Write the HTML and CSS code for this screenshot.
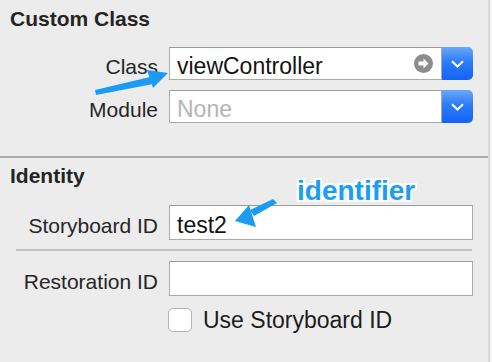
FILE: index.html
```html
<!DOCTYPE html>
<html lang="en">
<head>
    <meta charset="UTF-8" />
    <title>Identity Inspector</title>
    <link rel="stylesheet" href="styles.css">
</head>
<body>
    <div class="panel">
        <div class="section custom-class">
            <h2 class="title">Custom Class</h2>
            <div class="row">
                <label class="label">Class</label>
                <div class="field">
                    <div class="field-box">
                        <span class="value">viewController</span>
                        <svg class="goto" width="19" height="19" viewBox="0 0 19 19">
                            <circle cx="9.5" cy="9.5" r="9.5" fill="#8c8c8c"/>
                            <path d="M4.5 7.6h5V4.6l5 4.9-5 4.9v-3h-5z" fill="#fff"/>
                        </svg>
                    </div>
                    <div class="combo-btn">
                        <svg width="13" height="8" viewBox="0 0 13 8"><path d="M1 1.2l5.5 5.3 5.5-5.3" fill="none" stroke="#fff" stroke-width="2"/></svg>
                    </div>
                </div>
            </div>
            <div class="row">
                <label class="label">Module</label>
                <div class="field">
                    <div class="field-box">
                        <span class="value placeholder">None</span>
                    </div>
                    <div class="combo-btn">
                        <svg width="13" height="8" viewBox="0 0 13 8"><path d="M1 1.2l5.5 5.3 5.5-5.3" fill="none" stroke="#fff" stroke-width="2"/></svg>
                    </div>
                </div>
            </div>
        </div>
        <div class="divider"></div>
        <div class="section identity">
            <h2 class="title">Identity</h2>
            <div class="row">
                <label class="label">Storyboard ID</label>
                <div class="field text-field">
                    <div class="field-box"><span class="value">test2</span></div>
                </div>
            </div>
            <div class="inner-divider"></div>
            <div class="row">
                <label class="label">Restoration ID</label>
                <div class="field text-field">
                    <div class="field-box"><span class="value">&nbsp;</span></div>
                </div>
            </div>
            <div class="check-row">
                <span class="checkbox"></span>
                <span class="check-label">Use Storyboard ID</span>
            </div>
        </div>
    </div>

    <!-- annotations drawn over the screenshot -->
    <svg class="annotations" width="492" height="362" viewBox="0 0 492 362">
        <g fill="#1b9bf4">
            <polygon points="95,90 150,77 153,84 96,95"/>
            <polygon points="147,70 168,73 153,88"/>
            <polygon points="250,210 273,199 277,203 254,216"/>
            <polygon points="235,221 249,205 256,227"/>
        </g>
    </svg>
    <div class="note">identifier</div>
</body>
</html>
```

FILE: styles.css
```css
body {
    margin: 0;
    width: 492px;
    height: 362px;
    overflow: hidden;
    position: relative;
    background-color: #f4f4f4;
    font-family: "Liberation Sans", Arial, sans-serif;
    color: #262626;
}

.panel {
    width: 488px;
    height: 362px;
    background-color: #ececec;
    border-right: 2px solid #d8d8d8;
}

.section {
    padding-top: 7px;
}

.custom-class {
    padding-bottom: 33px;
}

.identity {
    padding-top: 6px;
}

.title {
    margin: 0 0 16px 10px;
    font-size: 21px;
    line-height: 24px;
    font-weight: bold;
    color: #242424;
}

.identity .title {
    margin-bottom: 17px;
}

.row {
    display: flex;
    align-items: baseline;
    gap: 11px;
}

.row + .row {
    margin-top: 10px;
}

.label {
    width: 158px;
    text-align: right;
    font-size: 21px;
    flex-shrink: 0;
}

.field {
    display: flex;
    width: 304px;
    height: 33px;
}

.text-field {
    height: 35px;
}

.field-box {
    flex: 1;
    display: flex;
    align-items: center;
    box-sizing: border-box;
    background-color: #fff;
    border: 1px solid #ababab;
    border-top-color: #9c9c9c;
}

.value {
    display: block;
    flex: 1;
    padding: 5px 0 0 7px;
    height: 26px;
    font-size: 23px;
    line-height: 26px;
    color: #141414;
}

.placeholder {
    color: #b5b5b5;
}

.goto {
    margin-right: 8px;
    flex-shrink: 0;
}

.combo-btn {
    width: 31px;
    display: flex;
    align-items: center;
    justify-content: center;
    border-radius: 0 5px 5px 0;
    background: linear-gradient(#68a9fb, #2c7cf8 45%, #1463f6);
}

.divider {
    height: 2px;
    background-color: #acacac;
}

.inner-divider {
    height: 2px;
    margin: 9px 16px 10px 16px;
    background-color: #c2c2c2;
}

.check-row {
    display: flex;
    align-items: center;
    gap: 11px;
    margin: 11px 0 0 168px;
}

.checkbox {
    width: 22px;
    height: 22px;
    border: 1px solid #b3b3b3;
    border-radius: 5px;
    background-color: #fff;
}

.check-label {
    font-size: 23px;
    line-height: 26px;
    color: #1c1c1c;
}

.annotations {
    position: absolute;
    top: 0;
    left: 0;
    pointer-events: none;
}

.note {
    position: absolute;
    top: 177px;
    left: 297px;
    font-size: 28px;
    line-height: 28px;
    font-weight: bold;
    color: #1b9cf5;
    text-shadow: 2px 0 0 #fff, -2px 0 0 #fff, 0 2px 0 #fff, 0 -2px 0 #fff,
        2px 2px 0 #fff, -2px -2px 0 #fff, 2px -2px 0 #fff, -2px 2px 0 #fff,
        0 0 3px #bbb;
}
```
